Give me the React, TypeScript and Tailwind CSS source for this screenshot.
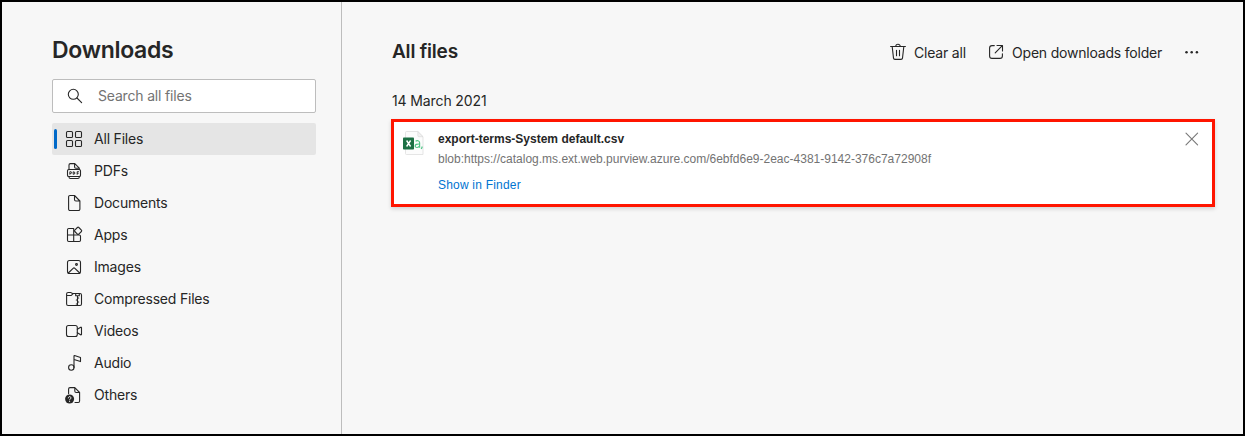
import React from 'react';

function Icon({ children }: { children: React.ReactNode }) {
  return (
    <svg className="block h-5 w-5 shrink-0" viewBox="0 0 20 20" fill="none" stroke="currentColor" strokeWidth="1.1" strokeLinecap="round" strokeLinejoin="round">
      {children}
    </svg>
  );
}

const items: { label: string; icon: React.ReactNode }[] = [
  {
    label: 'All Files',
    icon: (
      <>
        <rect x="2.5" y="2.5" width="6" height="6" rx="1.1" />
        <rect x="11.5" y="2.5" width="6" height="6" rx="1.1" />
        <rect x="2.5" y="11.5" width="6" height="6" rx="1.1" />
        <rect x="11.5" y="11.5" width="6" height="6" rx="1.1" />
      </>
    ),
  },
  {
    label: 'PDFs',
    icon: (
      <>
        <path d="M5 8.6V4a1.4 1.4 0 0 1 1.4-1.4h4.4l4.5 4.5v1.5M10.6 2.8v3.3a1.2 1.2 0 0 0 1.2 1.2h3.3M5 15.6v.5a1.4 1.4 0 0 0 1.4 1.4h7.5a1.4 1.4 0 0 0 1.4-1.4v-.5" />
        <rect x="3.5" y="8.5" width="13" height="7" rx="1.3" />
        <path strokeWidth="1" strokeLinecap="butt" d="M5.9 13.7v-3h.8a.9.9 0 0 1 0 1.800h-.8M9.200 10.800v2.500h.4a1.250 1.250 0 0 0 0-2.500zM13.200 13.700v-3h1.700M13.200 12.300h1.400" />
      </>
    ),
  },
  {
    label: 'Documents',
    icon: <path d="M10.500 2.500H6A1.400 1.400 0 0 0 4.600 4v12A1.400 1.400 0 0 0 6 17.500h8.500a1.400 1.400 0 0 0 1.400-1.400V8zM10.500 2.500v4.100a1.400 1.400 0 0 0 1.400 1.400h4" />,
  },
  {
    label: 'Apps',
    icon: (
      <>
        <path d="M9.700 16.500V3.500H4.700a1.200 1.200 0 0 0-1.200 1.200v10.600a1.200 1.200 0 0 0 1.200 1.200h10.600a1.200 1.200 0 0 0 1.200-1.200v-4.100a1.200 1.200 0 0 0-1.200-1.200H3.500" />
        <path d="m13.400 2.500-2.600 2.600a1 1 0 0 0 0 1.400l2.600 2.600a1 1 0 0 0 1.400 0l2.600-2.600a1 1 0 0 0 0-1.400l-2.600-2.600a1 1 0 0 0-1.400 0z" fill="#f7f7f7" />
      </>
    ),
  },
  {
    label: 'Images',
    icon: (
      <>
        <rect x="3.500" y="3.500" width="13" height="13" rx="2" />
        <path d="m4.300 16 4.800-4.700a1.300 1.300 0 0 1 1.800 0l4.800 4.700" />
        <circle cx="12.500" cy="7.500" r=".9" />
      </>
    ),
  },
  {
    label: 'Compressed Files',
    icon: (
      <>
        <path d="M2.600 6.500h4c.4 0 .7-.1 1-.4l1.500-1.600h6.900a1.500 1.500 0 0 1 1.500 1.500v9a1.500 1.500 0 0 1-1.500 1.500H4.100a1.500 1.500 0 0 1-1.500-1.500V5a1.500 1.500 0 0 1 1.500-1.500h2.500c.4 0 .7.1 1 .4l1.500.8" />
        <path d="M11.700 4.600v2.200h3.600V4.600M13.500 6.800v9.700M13.500 9h1.200M12.300 11h1.200M13.500 13h1.200M12.300 15h1.200" />
      </>
    ),
  },
  {
    label: 'Videos',
    icon: (
      <>
        <rect x="2.500" y="4.500" width="10.800" height="11" rx="2" />
        <path d="m13.300 8.300 3.400-2.100a.5.500 0 0 1 .8.400v6.800a.5.500 0 0 1-.8.400l-3.400-2.100" />
      </>
    ),
  },
  {
    label: 'Audio',
    icon: (
      <>
        <circle cx="7.300" cy="14.500" r="2.700" />
        <path d="M10 14.500V2.900a.4.400 0 0 1 .5-.4l6 2.100v4L10 6.500" />
      </>
    ),
  },
  {
    label: 'Others',
    icon: (
      <>
        <path d="M4.600 8.600V4a1.400 1.400 0 0 1 1.400-1.400h4.800l4.800 4.900v8.600a1.400 1.400 0 0 1-1.400 1.400H11M10.800 2.700v3.400a1.400 1.400 0 0 0 1.400 1.400h3.400" />
        <circle cx="5.600" cy="14" r="4.500" fill="currentColor" stroke="none" />
        <path stroke="#f7f7f7" strokeWidth="1" d="M4.300 12.900a1.300 1.300 0 1 1 2.100 1c-.5.300-.8.500-.8 1M5.600 16.500v.1" />
      </>
    ),
  },
];

function FileIcon() {
  return (
    <svg className="block h-[26px] w-[22px] shrink-0" viewBox="0 0 22 26">
      <path d="M3.500 1.500h11.300l5.200 5.200v17.800H3.500a1 1 0 0 1-1-1v-21a1 1 0 0 1 1-1z" fill="#fcfcfc" stroke="#dedede" strokeWidth=".8" />
      <path d="M14.800 1.500v4.200a1 1 0 0 0 1 1H20z" fill="#f1f1f1" stroke="#d6d6d6" strokeWidth=".6" />
      <rect x="0" y="7.600" width="11" height="12" rx=".8" fill="#1c7044" />
      <path d="m3.600 10.500 4 6m0-6-4 6" stroke="#fff" strokeWidth="1.400" />
      <path d="M12.600 11.200c1.300-1 4-.8 4 1.500v5M16.600 14c-2.800-.1-4.400.4-4.400 2 0 2 3.400 2 4.400-.2M19 16.500v1l-.8 1.400" fill="none" stroke="#4fc486" strokeWidth="1.200" />
    </svg>
  );
}

export default function App() {
  return (
    <div className="flex h-[436px] w-[1245px] overflow-hidden border-2 border-black bg-[#f7f7f7] font-['Inter','Liberation_Sans',sans-serif] text-[#262626]">
      <aside className="w-[340px] shrink-0 border-r border-[#bdbdbd] pl-[50px] pt-8">
        <h1 className="h-8 whitespace-nowrap text-[23px] font-semibold leading-8 tracking-[-0.3px]">Downloads</h1>
        <label className="mt-[13px] flex h-[34px] w-[264px] items-center rounded-[2px] border border-[#bdbdbd] bg-white pl-3">
          <Icon>
            <circle cx="8.300" cy="8.300" r="5" />
            <path d="m12 12 4.600 4.600" />
          </Icon>
          <span className="ml-[13px] text-[14px] leading-5 tracking-[-0.18px] text-[#737373]">Search all files</span>
        </label>
        <nav className="mt-[10px] w-[264px]">
          {items.map((item, i) => (
            <div key={item.label} className={`flex h-8 items-center rounded-[2px] ${i === 0 ? 'bg-[#e5e5e5]' : ''}`}>
              <span className={`ml-[2px] h-5 w-[3px] rounded-[2px] ${i === 0 ? 'bg-[#0069c8]' : ''}`} />
              <span className="ml-[7px]">
                <Icon>{item.icon}</Icon>
              </span>
              <span className="ml-[10px] whitespace-nowrap text-[14px] leading-5 tracking-[-0.2px]">{item.label}</span>
            </div>
          ))}
        </nav>
      </aside>
      <main className="flex-1 pl-[49px] pr-7">
        <header className="mt-[34px] flex h-8 items-center">
          <h2 className="whitespace-nowrap pl-px text-[19px] font-semibold leading-8 tracking-[-0.2px]">All files</h2>
          <div className="ml-auto flex items-center whitespace-nowrap pr-[13px] text-[14px] leading-5 tracking-[-0.2px]">
            <Icon>
              <path d="M2.600 4.500h14.800M7.800 4.300a2.200 2 0 0 1 4.400 0M4.200 4.700l1.300 11.400a1.500 1.500 0 0 0 1.500 1.300h6a1.500 1.500 0 0 0 1.500-1.300L15.800 4.700M8.500 8.200v5.600M11.500 8.200v5.600" />
            </Icon>
            <span className="ml-[6px] w-[72px] pt-[2px]">Clear all</span>
            <Icon>
              <path d="M8.300 3.600H6a2.400 2.400 0 0 0-2.400 2.400v8A2.400 2.400 0 0 0 6 16.400h8a2.400 2.400 0 0 0 2.400-2.400v-2.300M11 3.500h5.500V9M16.300 3.700 9.200 10.800" />
            </Icon>
            <span className="ml-[6px] w-[170px] pt-[2px]">Open downloads folder</span>
            <Icon>
              <g fill="currentColor" stroke="none">
                <circle cx="4.500" cy="10.300" r="1.250" />
                <circle cx="9.700" cy="10.300" r="1.250" />
                <circle cx="14.900" cy="10.300" r="1.250" />
              </g>
            </Icon>
          </div>
        </header>
        <h3 className="mt-[23px] h-5 pl-px text-[14px] font-normal leading-5 tracking-[-0.12px]">14 March 2021</h3>
        <section className="mt-2 flex h-[88px] w-[824px] border-[3px] border-[#ff1500] bg-white pl-[9px] shadow-[0_2px_4px_rgba(0,0,0,0.15)]">
          <div className="pt-[8px]">
            <FileIcon />
          </div>
          <div className="ml-[13px] flex-1 whitespace-nowrap font-['Liberation_Sans',Arial,sans-serif] text-[12px]">
            <p className="mt-[9px] h-4 font-bold leading-4">export-terms-System default.csv</p>
            <p className="mt-1 h-4 leading-4 text-[#737373]">blob:https://catalog.ms.ext.web.purview.azure.com/6ebfd6e9-2eac-4381-9142-376c7a72908f</p>
            <p className="mt-[10px] h-4 leading-4 tracking-[0.2px] text-[#0074d1]">Show in Finder</p>
          </div>
          <button aria-label="Remove" className="mr-[10px] mt-[7px] h-5 w-5 text-[#777777]">
            <Icon>
              <path d="m4 4.200 11.600 11.600M15.600 4.200 4 15.800" />
            </Icon>
          </button>
        </section>
      </main>
    </div>
  );
}
